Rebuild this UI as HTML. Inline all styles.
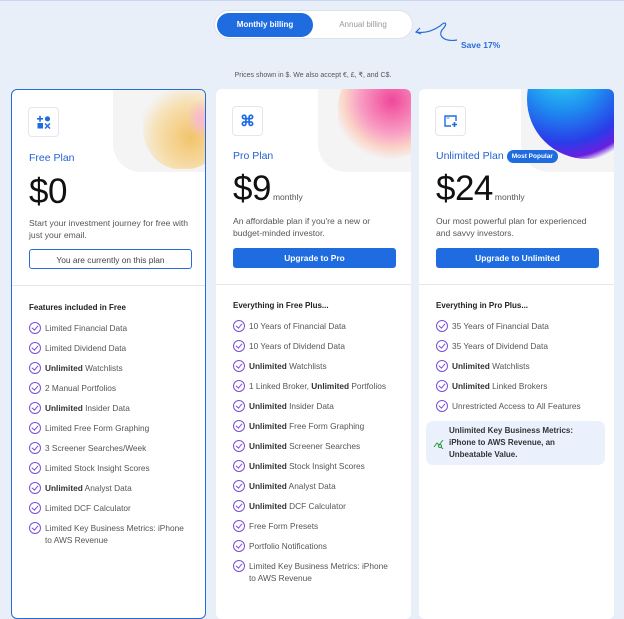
<!DOCTYPE html>
<html><head><meta charset="utf-8"><style>
*{box-sizing:border-box;margin:0;padding:0}
body{width:624px;height:609px;overflow:hidden;background:#e9eff9;font-family:"Liberation Sans",sans-serif;position:relative;color:#333}
.topline{position:absolute;left:0;top:0;width:624px;height:1px;background:#c9d6f0}
.toggle{position:absolute;left:214px;top:10px;width:199px;height:29px;background:#fff;border:1px solid #dde3ee;border-radius:15px}
.toggle .on{position:absolute;left:2px;top:2px;width:96px;height:24px;background:#1f6be0;border-radius:12px;color:#fff;font-size:8px;font-weight:bold;text-align:center;line-height:24px}
.toggle .off{position:absolute;left:108px;top:2px;width:80px;line-height:24px;font-size:8px;color:#999;text-align:center}
.save{position:absolute;left:461px;top:40px;font-size:8.5px;color:#2a6bd6;font-weight:bold}
.note{position:absolute;left:0;width:626px;top:71px;text-align:center;font-size:7px;color:#555}
.card{position:absolute;top:89px;width:195px;height:530px;background:#fff;border-radius:6px;overflow:hidden}
.card.sel{border:1px solid #2a6bd6}
.deco{position:absolute;right:0;top:0;width:93px;height:83px;background:#f4f4f5;border-bottom-left-radius:28px;overflow:hidden}
.ib{position:absolute;left:16px;top:17px;width:31px;height:30px;border:1px solid #e3e6ec;border-radius:4px;background:#fff;display:flex;align-items:center;justify-content:center}
.pn{position:absolute;left:17px;top:62px;font-size:10.5px;color:#2463d1}
.badge{display:inline-block;background:#1f6be0;color:#fff;font-size:6.5px;font-weight:bold;padding:3px 5px;border-radius:8px;margin-left:3px;vertical-align:1px}
.price{position:absolute;left:17px;top:82px;font-size:35px;color:#111;letter-spacing:-0.5px}
.price span{font-size:8.5px;color:#555;letter-spacing:0;margin-left:2px}
.desc{position:absolute;left:17px;top:127px;width:168px;font-size:8.6px;line-height:12px;color:#555}
.btn{position:absolute;left:17px;top:159px;width:163px;height:20px;border-radius:3px;font-size:8.4px;text-align:center;line-height:20px}
.btn.out{border:1px solid #2a6bd6;color:#444}
.btn.fill{background:#1f6be0;color:#fff;font-weight:bold}
.hr{position:absolute;left:0;right:0;top:195px;height:1px;background:#e6e6e6}
.fh{position:absolute;left:17px;top:213px;font-size:8px;font-weight:bold;color:#222}
ul{position:absolute;left:17px;top:232px;list-style:none;width:160px}
li{position:relative;padding-left:16px;font-size:8.3px;color:#555;line-height:12px;margin-bottom:8px}
li b{color:#333}
li:before{content:"";position:absolute;left:0;top:0;width:12px;height:12px;border:1.3px solid #7b4fd6;border-radius:50%;box-sizing:border-box}
li:after{content:"";position:absolute;left:4.3px;top:2.4px;width:2.6px;height:5px;border-right:1.3px solid #7b4fd6;border-bottom:1.3px solid #7b4fd6;transform:rotate(40deg)}
.hl{position:absolute;left:7px;top:332px;width:179px;height:44px;background:#eaf1fc;border-radius:7px;font-size:8px;line-height:12px;color:#333;font-weight:bold;padding:4px 20px 0 23px}
</style></head><body>
<div class="topline"></div>
<div class="toggle"><div class="on">Monthly billing</div><div class="off">Annual billing</div></div>
<svg style="position:absolute;left:412px;top:18px" width="50" height="30" viewBox="0 0 50 30"><path d="M4 14 C14 16 22 12 28 8 C34 2 36 6 30 12 C26 18 32 24 45 22" fill="none" stroke="#2a6bd6" stroke-width="1.2"/><path d="M8 10 L4 14 L9 16" fill="none" stroke="#2a6bd6" stroke-width="1.2"/></svg>
<div class="save">Save 17%</div>
<div class="note">Prices shown in $. We also accept €, £, ₹, and C$.</div>

<div class="card sel" style="left:11px">
 <div class="deco" style="right:-1px;top:-1px"><div style="position:absolute;left:30px;top:-10px;width:80px;height:90px;border-radius:45%;background:radial-gradient(circle at 60% 65%,#f2c46a,#f7dfb0 45%,rgba(250,230,220,0) 72%)"></div><div style="position:absolute;right:-10px;top:10px;width:30px;height:40px;background:radial-gradient(#f9b5d8,rgba(255,255,255,0) 70%)"></div></div>
 <div class="ib"><svg width="14" height="14" viewBox="0 0 14 14" fill="#1f6be0"><rect x="0" y="3" width="6" height="1.6"/><rect x="2.2" y="0.8" width="1.6" height="6"/><circle cx="10.5" cy="3.8" r="2.6"/><rect x="0.5" y="8" width="5.5" height="5.5"/><path d="M8 8.5l5 5M13 8.5l-5 5" stroke="#1f6be0" stroke-width="1.5"/></svg></div>
 <div class="pn">Free Plan</div>
 <div class="price">$0</div>
 <div class="desc">Start your investment journey for free with just your email.</div>
 <div class="btn out">You are currently on this plan</div>
 <div class="hr"></div>
 <div class="fh">Features included in Free</div>
 <ul><li>Limited Financial Data</li><li>Limited Dividend Data</li><li><b>Unlimited</b> Watchlists</li><li>2 Manual Portfolios</li><li><b>Unlimited</b> Insider Data</li><li>Limited Free Form Graphing</li><li>3 Screener Searches/Week</li><li>Limited Stock Insight Scores</li><li><b>Unlimited</b> Analyst Data</li><li>Limited DCF Calculator</li><li>Limited Key Business Metrics: iPhone to AWS Revenue</li></ul>
</div>

<div class="card" style="left:216px">
 <div class="deco"><div style="position:absolute;left:20px;top:-20px;width:90px;height:90px;border-radius:40%;background:radial-gradient(circle at 60% 35%,#f0479a,#f89cc3 40%,#fbd4c8 60%,rgba(255,240,230,0) 75%)"></div></div>
 <div class="ib"><span style="color:#1f6be0;font-size:15px;font-weight:bold">⌘</span></div>
 <div class="pn" style="top:61px">Pro Plan</div>
 <div class="price" style="top:80px">$9<span>monthly</span></div>
 <div class="desc" style="top:126px;width:155px">An affordable plan if you're a new or budget-minded investor.</div>
 <div class="btn fill" style="top:159px">Upgrade to Pro</div>
 <div class="hr"></div>
 <div class="fh" style="top:212px">Everything in Free Plus...</div>
 <ul style="top:231px"><li>10 Years of Financial Data</li><li>10 Years of Dividend Data</li><li><b>Unlimited</b> Watchlists</li><li>1 Linked Broker, <b>Unlimited</b> Portfolios</li><li><b>Unlimited</b> Insider Data</li><li><b>Unlimited</b> Free Form Graphing</li><li><b>Unlimited</b> Screener Searches</li><li><b>Unlimited</b> Stock Insight Scores</li><li><b>Unlimited</b> Analyst Data</li><li><b>Unlimited</b> DCF Calculator</li><li>Free Form Presets</li><li>Portfolio Notifications</li><li>Limited Key Business Metrics: iPhone to AWS Revenue</li></ul>
</div>

<div class="card" style="left:419px">
 <div class="deco"><div style="position:absolute;left:6px;top:-50px;width:120px;height:120px;border-radius:50%;background:radial-gradient(circle at 30% 25%,#2ee6f0,#1e8af0 35%,#2a3ce8 60%,#6a1fe0 72%,rgba(200,180,250,0) 78%)"></div></div>
 <div class="ib"><svg width="14" height="13" viewBox="0 0 14 13" fill="none" stroke="#1f6be0" stroke-width="1.4"><path d="M7 11H1V1h11v5"/><path d="M2.5 3h3" stroke-width="0.8"/><path d="M10.5 7v5M8 9.5h5" stroke-width="1.6"/></svg></div>
 <div class="pn" style="top:61px">Unlimited Plan<span class="badge">Most Popular</span></div>
 <div class="price" style="top:80px">$24<span>monthly</span></div>
 <div class="desc" style="top:126px;width:158px">Our most powerful plan for experienced and savvy investors.</div>
 <div class="btn fill" style="top:159px">Upgrade to Unlimited</div>
 <div class="hr"></div>
 <div class="fh" style="top:212px">Everything in Pro Plus...</div>
 <ul style="top:231px"><li>35 Years of Financial Data</li><li>35 Years of Dividend Data</li><li><b>Unlimited</b> Watchlists</li><li><b>Unlimited</b> Linked Brokers</li><li>Unrestricted Access to All Features</li></ul>
 <div class="hl"><svg style="position:absolute;left:7px;top:18px" width="11" height="10" viewBox="0 0 11 10" fill="none" stroke="#2a9a3a" stroke-width="1"><path d="M1 8l3-4 2 2 4-5"/><circle cx="7" cy="7" r="1.5"/><path d="M8 8l2 2"/></svg>Unlimited Key Business Metrics: iPhone to AWS Revenue, an Unbeatable Value.</div>
</div>
</body></html>
